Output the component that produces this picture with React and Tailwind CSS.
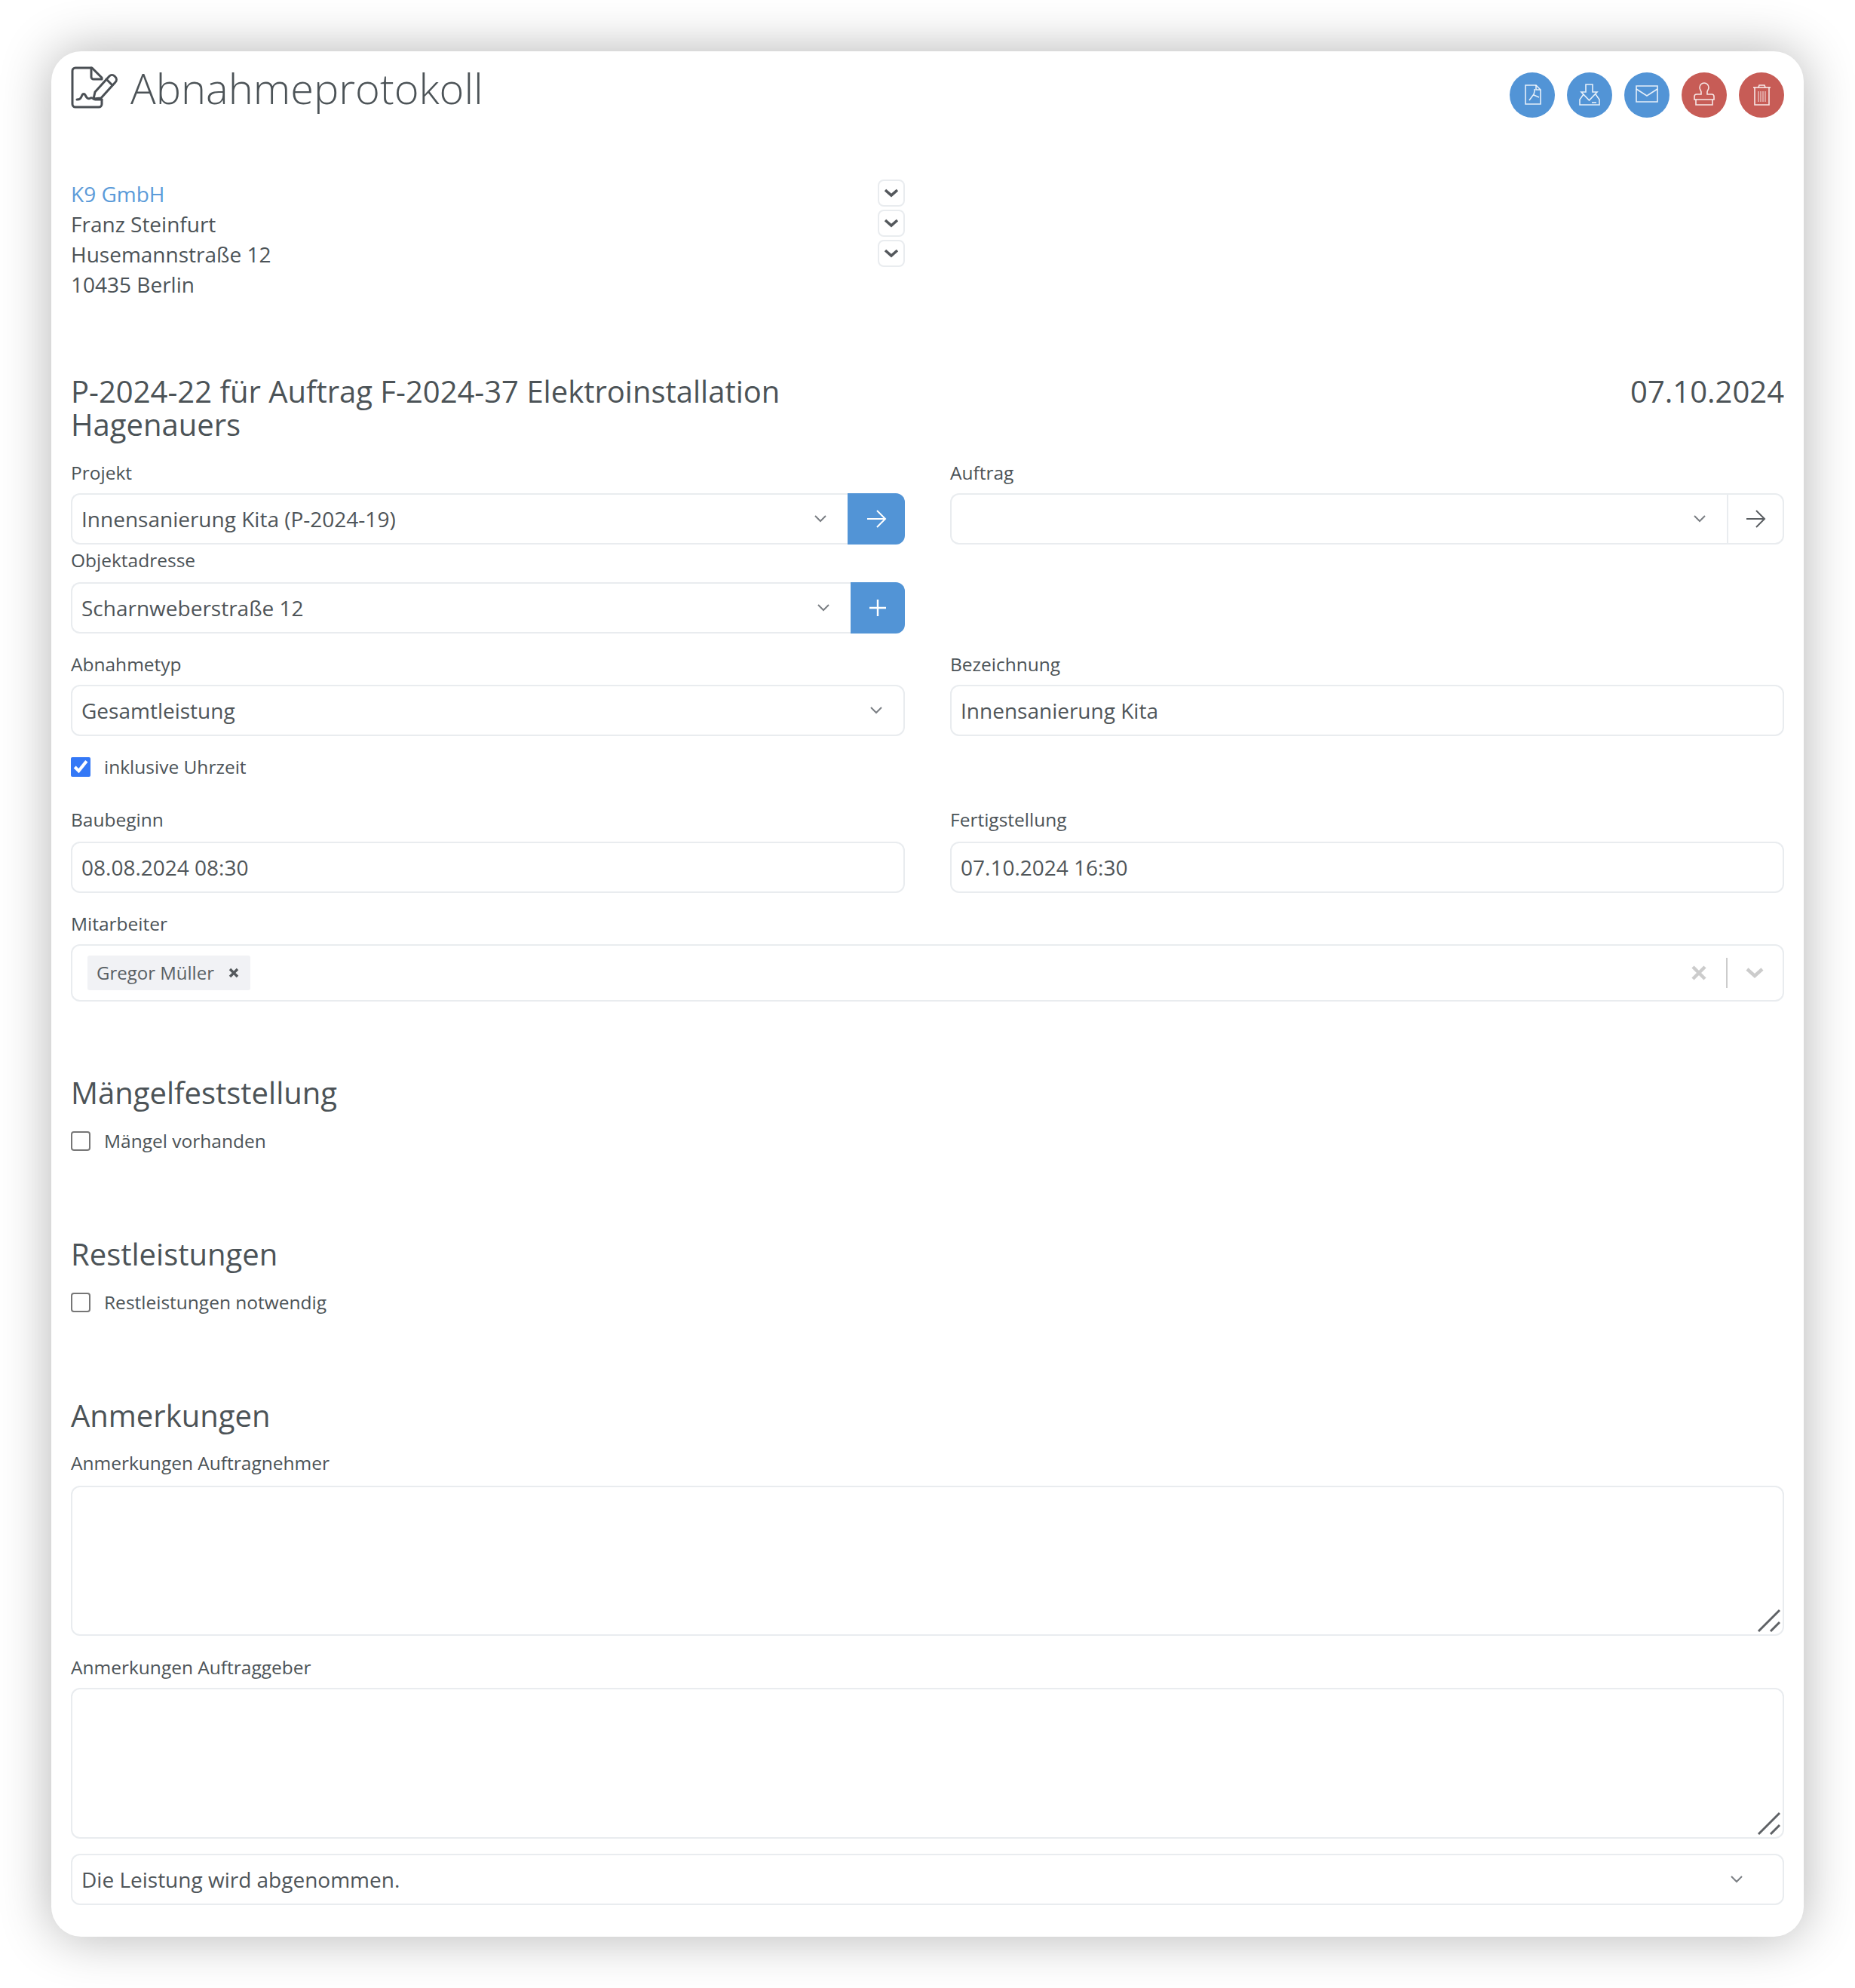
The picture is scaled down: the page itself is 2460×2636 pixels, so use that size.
const iconStroke = 'rgba(255,255,255,0.85)';

function Chevron({ className = '' }) {
  return (
    <svg viewBox="0 0 18 12" className={`w-[18px] h-[12px] ${className}`} fill="none" stroke="#7b7f84" strokeWidth="2">
      <path d="M2 2l7 7 7-7" />
    </svg>
  );
}

function ArrowRight({ color }) {
  return (
    <svg viewBox="0 0 28 26" className="w-[28px] h-[26px]" fill="none" stroke={color} strokeWidth="2">
      <path d="M2 13h23M15 2l11 11-11 11" />
    </svg>
  );
}

function RoundButton({ red, children }) {
  return (
    <button className={`w-[60px] h-[60px] rounded-full ${red ? 'bg-[#c75c56]' : 'bg-[#5294d6]'}`}>
      <svg viewBox="0 0 60 60" className="w-[60px] h-[60px]" fill="none" stroke={iconStroke} strokeWidth="1.6">
        {children}
      </svg>
    </button>
  );
}

function SmallToggle() {
  return (
    <button className="w-[36px] h-[36px] rounded-[8px] border-2 border-[#e9ecef] flex items-center justify-center">
      <svg viewBox="0 0 20 14" className="w-[20px] h-[14px]" fill="none" stroke="#54585c" strokeWidth="3.6">
        <path d="M2 3l8 7 8-7" />
      </svg>
    </button>
  );
}

function Label({ className = '', children }) {
  return <div className={`h-[34px] leading-[34px] text-[24.5px] text-[#4c5357] ${className}`}>{children}</div>;
}

function SelectBox({ value, arrowPad = 'pr-[27px]', button, className = '' }) {
  return (
    <div className={`flex h-[68px] ${className}`}>
      <div
        className={`flex-1 flex items-center justify-between pl-[12px] ${arrowPad} border-2 border-[#e9ecef] text-[28px] text-[#4f5559] ${
          button ? 'rounded-l-[12px] border-r-0' : 'rounded-[12px]'
        }`}
      >
        <span>{value}</span>
        <Chevron />
      </div>
      {button}
    </div>
  );
}

function TextInput({ value }) {
  return (
    <input
      readOnly
      value={value}
      className="w-full h-[68px] px-[12px] border-2 border-[#e9ecef] rounded-[12px] text-[28px] text-[#4f5559] outline-none"
    />
  );
}

function CheckRow({ checked, label, className = '' }) {
  return (
    <label className={`flex items-center gap-[18px] h-[34px] text-[24.5px] text-[#4c5357] ${className}`}>
      {checked ? (
        <input type="checkbox" defaultChecked className="w-[26px] h-[26px] m-0 accent-[#3478f6]" />
      ) : (
        <input type="checkbox" className="appearance-none w-[26px] h-[26px] m-0 border-2 border-[#767676] rounded-[4px]" />
      )}
      {label}
    </label>
  );
}

function Note({ className = '' }) {
  return (
    <div className={`relative ${className}`}>
      <textarea readOnly className="block w-full h-full border-2 border-[#e9ecef] rounded-[12px] resize-none outline-none" />
      <svg viewBox="0 0 32 32" className="absolute right-[4px] bottom-[4px] w-[32px] h-[32px]" fill="none" stroke="#5f6266" strokeWidth="3">
        <path d="M2 30L30 2M18 30L30 18" />
      </svg>
    </div>
  );
}

function SectionTitle({ className = '', children }) {
  return <h3 className={`h-[48px] leading-[48px] text-[40px] font-normal text-[#4c5357] ${className}`}>{children}</h3>;
}

export default function App() {
  return (
    <div className="bg-white p-[68px] h-[2636px] font-['Open_Sans',sans-serif]">
      <div className="h-[2500px] bg-white rounded-[40px] shadow-[0_0_68px_rgba(0,0,0,0.3)] px-[26px]">
        {/* Kopf */}
        <div className="flex justify-between items-start h-[169px]">
          <div className="flex items-center gap-[15px] pt-[19px]">
            <svg viewBox="0 0 64 60" className="w-[64px] h-[60px]" fill="none" stroke="#4a4f54" strokeWidth="3" strokeLinejoin="round" strokeLinecap="round">
              <path d="M41 17v-1L28 3H6a4 4 0 0 0-4 4v44a4 4 0 0 0 4 4h31a4 4 0 0 0 4-4v-6" />
              <path d="M27 3v12a3 3 0 0 0 3 3h11" />
              <path d="M30 44l2-9 19-21a5 5 0 0 1 7 0l1 1a5 5 0 0 1 0 7L40 43z" />
              <path d="M47 18l8 8" />
              <path d="M8 45c4 0 5-1 7-6 1-2 3-2 4 0 2 4 4 6 7 4 2-1 4 1 6 2h9" />
            </svg>
            <h1 className="text-[56px] leading-[60px] font-light text-[#4c5357] -mt-[2px]">Abnahmeprotokoll</h1>
          </div>
          <div className="flex gap-[16px] pt-[28px]">
            <RoundButton>
              <path d="M21 17h14l6 6v19H21z" />
              <path d="M35 17v6h6" />
              <path d="M26 37l6-8c1-2 1-4 1-7M32 30l7 3" />
            </RoundButton>
            <RoundButton>
              <path d="M25 26V16h9v10h6L29.500 37 19 26z" />
              <path d="M22 29l-5 7v7h26v-7l-5-7" />
              <path d="M33 40h6" />
            </RoundButton>
            <RoundButton>
              <path d="M16 18h28v21H16z" />
              <path d="M16 22l14 9 14-9" />
            </RoundButton>
            <RoundButton red>
              <path d="M26 29v-3c0-2-2-3-2-6a6 6 0 0 1 12 0c0 3-2 4-2 6v3h6a3 3 0 0 1 3 3v4H17v-4a3 3 0 0 1 3-3z" />
              <path d="M19 36v7h22v-7" />
            </RoundButton>
            <RoundButton red>
              <path d="M19 20h23" />
              <path d="M21 20v23h19V20" />
              <path d="M26 20l1-3h7l1 3" />
              <path d="M26 25v14M29 25v14M32 25v14M35 25v14" strokeWidth="1" />
            </RoundButton>
          </div>
        </div>

        {/* Adresse */}
        <div className="flex gap-[60px] h-[160px] text-[28px] leading-[40px] text-[#4c5357]">
          <div className="flex-1 flex justify-between">
            <div>
              <div className="text-[#5b9bd9]">K9 GmbH</div>
              <div>Franz Steinfurt</div>
              <div>Husemannstraße 12</div>
              <div>10435 Berlin</div>
            </div>
            <div className="flex flex-col gap-[4px] pt-[1px]">
              <SmallToggle />
              <SmallToggle />
              <SmallToggle />
            </div>
          </div>
          <div className="flex-1" />
        </div>

        {/* Titel */}
        <div className="flex justify-between mt-[100px] text-[40px] leading-[44px] text-[#4c5357]">
          <h2 className="w-[1020px] font-normal">P-2024-22 für Auftrag F-2024-37 Elektroinstallation Hagenauers</h2>
          <div>07.10.2024</div>
        </div>

        {/* Formular */}
        <div className="grid grid-cols-2 gap-x-[60px] mt-[25px]">
          <div>
            <Label className="mb-[10px]">Projekt</Label>
            <SelectBox
              value="Innensanierung Kita (P-2024-19)"
              button={
                <button className="w-[76px] rounded-r-[12px] bg-[#5294d6] flex items-center justify-center">
                  <ArrowRight color="#ffffff" />
                </button>
              }
            />
          </div>
          <div>
            <Label className="mb-[10px]">Auftrag</Label>
            <SelectBox
              value=""
              button={
                <button className="w-[76px] rounded-r-[12px] border-2 border-[#e9ecef] flex items-center justify-center">
                  <ArrowRight color="#5a5e62" />
                </button>
              }
            />
          </div>

          <div className="mt-[4px]">
            <Label className="mb-[12px]">Objektadresse</Label>
            <SelectBox
              value="Scharnweberstraße 12"
              button={
                <button className="w-[72px] rounded-r-[12px] bg-[#5294d6] flex items-center justify-center">
                  <svg viewBox="0 0 22 22" className="w-[22px] h-[22px]" fill="none" stroke="#ffffff" strokeWidth="2.400">
                    <path d="M11 0v22M0 11h22" />
                  </svg>
                </button>
              }
            />
          </div>
          <div />

          <div className="mt-[24px]">
            <Label className="mb-[10px]">Abnahmetyp</Label>
            <SelectBox value="Gesamtleistung" />
          </div>
          <div className="mt-[24px]">
            <Label className="mb-[10px]">Bezeichnung</Label>
            <TextInput value="Innensanierung Kita" />
          </div>
        </div>

        <CheckRow checked label="inklusive Uhrzeit" className="mt-[24px]" />

        <div className="grid grid-cols-2 gap-x-[60px] mt-[36px]">
          <div>
            <Label className="mb-[12px]">Baubeginn</Label>
            <TextInput value="08.08.2024 08:30" />
          </div>
          <div>
            <Label className="mb-[12px]">Fertigstellung</Label>
            <TextInput value="07.10.2024 16:30" />
          </div>
        </div>

        <Label className="mt-[24px] mb-[10px]">Mitarbeiter</Label>
        <div className="flex items-center h-[76px] pl-[20px] border-2 border-[#e9ecef] rounded-[12px]">
          <div className="flex items-center h-[46px] w-[216px] pl-[12px] bg-[#f1f2f5] rounded-[3px] text-[24px] text-[#5a6065]">
            <span className="flex-1">Gregor Müller</span>
            <svg viewBox="0 0 14 14" className="w-[14px] h-[14px] mr-[15px]" fill="none" stroke="#54585c" strokeWidth="3.400">
              <path d="M2 2l10 10M12 2L2 12" />
            </svg>
          </div>
          <div className="flex-1" />
          <svg viewBox="0 0 20 20" className="w-[20px] h-[20px]" fill="none" stroke="#cccccc" strokeWidth="4.500">
            <path d="M2 2l16 16M18 2L2 18" />
          </svg>
          <div className="w-[2px] h-[40px] bg-[#cccccc] ml-[26px]" />
          <svg viewBox="0 0 24 16" className="w-[24px] h-[16px] ml-[24px] mr-[25px]" fill="none" stroke="#cccccc" strokeWidth="4.500">
            <path d="M2 3l10 9 10-9" />
          </svg>
        </div>

        <SectionTitle className="mt-[97px]">Mängelfeststellung</SectionTitle>
        <CheckRow label="Mängel vorhanden" className="mt-[23px]" />

        <SectionTitle className="mt-[109px]">Restleistungen</SectionTitle>
        <CheckRow label="Restleistungen notwendig" className="mt-[23px]" />

        <SectionTitle className="mt-[109px]">Anmerkungen</SectionTitle>
        <Label className="mt-[22px] mb-[13px]">Anmerkungen Auftragnehmer</Label>
        <Note className="h-[199px]" />
        <Label className="mt-[25px] mb-[10px]">Anmerkungen Auftraggeber</Label>
        <Note className="h-[200px]" />
        <SelectBox value="Die Leistung wird abgenommen." arrowPad="pr-[52px]" className="mt-[20px]" />
      </div>
    </div>
  );
}
